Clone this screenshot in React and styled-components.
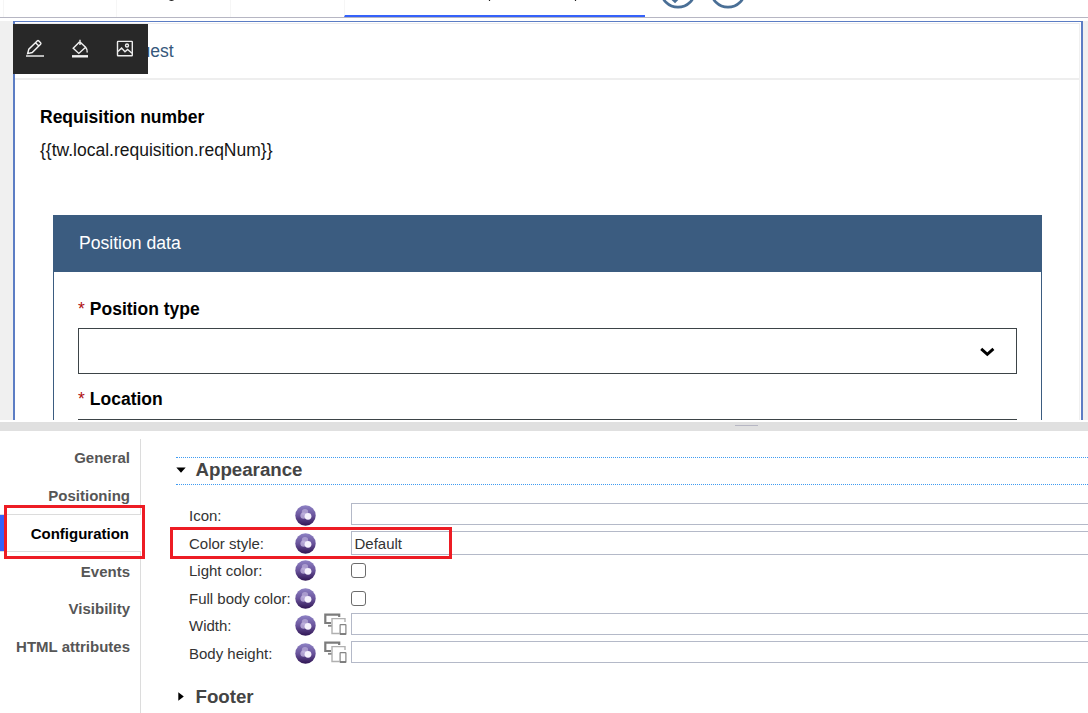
import React from "react";
import styled, { createGlobalStyle } from "styled-components";

const Global = createGlobalStyle`
  * { box-sizing: border-box; }
  body { margin: 0; background: #fff; overflow: hidden; font-family: "Liberation Sans", Arial, sans-serif; }
  svg { display: block; flex: none; }
`;

const Page = styled.div`
  width: 1088px;
  height: 713px;
  display: flex;
  flex-direction: column;
  overflow: hidden;
`;

const TabBar = styled.header`
  height: 18px;
  flex: none;
  display: flex;
  padding-left: 3px;
  border-bottom: 1px solid #b6b6c3;
`;

const Tab = styled.div`
  width: ${(p) => p.$w}px;
  height: 17px;
  padding-left: ${(p) => p.$inset || 0}px;
  border-left: 1px solid #f6f6f6;
  border-bottom: ${(p) => (p.$active ? "2px solid #3562fa" : "none")};
`;

const TabActions = styled.div`
  display: flex;
  padding-left: 13px;
`;

const Canvas = styled.main`
  height: 399px;
  margin-top: 3px;
  flex: none;
  display: flex;
  padding: 0 5px 0 13px;
  background: #f0f0f0;
  position: relative;
`;

const Selection = styled.div`
  flex: 1;
  background: #fff;
  border: 2px solid #5c7dc4;
  border-top-width: 1px;
  border-bottom: none;
  padding: 1px 1px 0 0;
  display: flex;
`;

const Form = styled.section`
  flex: 1;
  border-top: 1px solid #ececf0;
  border-right: 1px solid #f0f0f0;
  overflow: hidden;
`;

const FormTitle = styled.h1`
  margin: 0;
  height: 56px;
  padding-left: 125.5px;
  border-bottom: 2px solid #eeeeee;
  color: #36587c;
  font-size: 17.6px;
  font-weight: 400;
  line-height: 54px;
`;

const FormBody = styled.div`
  padding: 26px 37px 0 25px;
`;

const Label = styled.div`
  height: 22px;
  line-height: 22px;
  font-size: 17.5px;
  font-weight: 700;
  color: #000;
  white-space: pre;
`;

const Required = styled.span`
  font-weight: 400;
  color: #b01010;
  margin-right: 5px;
`;

const Value = styled.div`
  margin: 11px 0 54px;
  height: 22px;
  line-height: 22px;
  font-size: 17.5px;
  color: #161616;
`;

const Panel = styled.section`
  margin-left: 13px;
  border: solid #3b5c80;
  border-width: 0 1px;
`;

const PanelTitle = styled.h2`
  margin: 0;
  height: 57px;
  padding-left: 25px;
  line-height: 57px;
  background: #3b5c80;
  color: #fff;
  font-size: 17.6px;
  font-weight: 400;
`;

const PanelBody = styled.div`
  padding: 26px 24px 0;
`;

const Select = styled.div`
  height: 46px;
  margin: 8px 0 14px;
  padding-right: 21px;
  border: 1px solid #3d4447;
  display: flex;
  align-items: center;
  justify-content: flex-end;
`;

const SelectTop = styled(Select)`
  margin: 9px 0 0;
`;

const FloatingTools = styled.div`
  position: absolute;
  left: 13px;
  top: 3px;
  width: 135px;
  height: 50px;
  background: #282828;
  display: flex;
  align-items: center;
  padding: 0 0 0 12px;
  gap: 25px;
`;

const Splitter = styled.div`
  height: 9px;
  margin-top: 2px;
  flex: none;
  background: #e0e0e0;
  display: flex;
  padding: 3px 0 0 735px;
`;

const Grip = styled.div`
  width: 23px;
  height: 1px;
  background: #b6b6c3;
`;

const Properties = styled.div`
  flex: 1;
  display: flex;
  position: relative;
`;

const SideNav = styled.nav`
  width: 141px;
  margin-top: 8px;
  display: flex;
  flex-direction: column;
`;

const NavItem = styled.div`
  height: ${(p) => p.$h}px;
  padding-right: ${(p) => (p.$active ? 12 : 10)}px;
  line-height: ${(p) => p.$line}px;
  text-align: right;
  font-size: 15px;
  font-weight: 700;
  color: ${(p) => (p.$active ? "#000" : "#565656")};
  border: solid #dcdcdc;
  border-width: ${(p) => (p.$active ? "1px 0" : "0 1px 0 0")};
  ${(p) => p.$active && "background: linear-gradient(to right, #3562fa 4px, transparent 4px);"}
`;

const NavRest = styled.div`
  flex: 1;
  border-right: 1px solid #dcdcdc;
`;

const Settings = styled.div`
  flex: 1;
  padding: 26px 0 0 35px;
`;

const SectionTitle = styled.h3`
  margin: 0;
  height: 28px;
  display: flex;
  align-items: center;
  gap: ${(p) => p.$gap}px;
  padding-left: ${(p) => p.$left}px;
  padding-bottom: 3px;
  font-size: 18.7px;
  color: #444;
  border: dotted #3f9bf2;
  border-width: ${(p) => (p.$lined ? "1px 0" : "0")};
`;

const Rows = styled.div`
  padding: 17px 0 16px 13px;
`;

const Row = styled.div`
  height: ${(p) => p.$h}px;
  display: grid;
  grid-template-columns: 106px 27px 29px 1fr;
`;

const RowLabel = styled.label`
  font-size: 15px;
  line-height: 28px;
  color: #333;
  white-space: nowrap;
`;

const IconCell = styled.div`
  padding-top: ${(p) => p.$top}px;
  padding-left: ${(p) => p.$left || 0}px;
`;

const Input = styled.div`
  height: ${(p) => p.$h || 22}px;
  margin: 1px 0 0;
  padding-left: 2.5px;
  border: 1px solid #b4b9c8;
  border-right: none;
  font-size: 15px;
  line-height: 24px;
  color: #333;
`;

const Check = styled.div`
  width: 15px;
  height: 15px;
  margin-top: 6px;
  border: 1px solid #6c6c6c;
  border-radius: 3px;
`;

const Highlight = styled.div`
  position: absolute;
  left: ${(p) => p.$x}px;
  top: ${(p) => p.$y}px;
  width: ${(p) => p.$w}px;
  height: ${(p) => p.$h}px;
  border: 3px solid #ed1c24;
`;

const PencilIcon = () => (
  <svg width="20" height="20" viewBox="0 0 20 20" fill="none" stroke="#f2f2f2" strokeWidth="1.4">
    <path d="M2.6 14.6 3.8 10.2 12.2 1.9Q13 1.2 13.8 1.9L15.6 3.7Q16.3 4.5 15.6 5.3L7.2 13.5ZM10.5 3.7l3.4 3.4" />
    <path d="M1 17h18" stroke="#c9c9c9" strokeWidth="1.8" />
  </svg>
);

const FillIcon = () => (
  <svg width="20" height="20" viewBox="0 0 20 20" fill="none" stroke="#f2f2f2" strokeWidth="1.4">
    <path d="M10 .8v5.2M9.4 3 3.2 9.2 8.8 14.4 15.6 8.3 10 3M15.2 7.7Q17.6 10.3 17.2 13.5" />
    <path d="M2 17.3h16" strokeWidth="2.4" />
  </svg>
);

const PictureIcon = () => (
  <svg width="20" height="20" viewBox="0 0 20 20" fill="none" stroke="#ededed" strokeWidth="1.4">
    <rect x="2.5" y="2.4" width="14.8" height="14.4" rx=".5" />
    <circle cx="12" cy="6.5" r="1.5" />
    <path d="M3 12.5 6.6 9 10 12.7 12.6 10.5 17 14.2" />
  </svg>
);

const Orb = () => (
  <svg width="21" height="21" viewBox="0 0 21 21">
    <defs>
      <linearGradient id="orb" x1="0" y1="0" x2="0" y2="1">
        <stop offset="0" stopColor="#8e82c4" />
        <stop offset=".5" stopColor="#6a549c" />
        <stop offset="1" stopColor="#301654" />
      </linearGradient>
    </defs>
    <circle cx="10.5" cy="10.5" r="10.2" fill="url(#orb)" />
    <circle cx="10" cy="7.2" r="3.2" fill="#b5a8d6" opacity=".8" />
    <circle cx="8.6" cy="10.6" r="3.2" fill="#c0b3dd" opacity=".8" />
    <circle cx="13" cy="11.3" r="3.4" fill="#f5f1fc" />
  </svg>
);

const DevicesIcon = () => (
  <svg width="23" height="23" viewBox="0 0 23 23" fill="none">
    <path d="M7 10H1.3V1.7H15.2V4" stroke="#7c7c7c" strokeWidth="2.2" />
    <path d="M4 12.8h4" stroke="#858585" strokeWidth="1.8" />
    <path d="M15.5 20.5H8V5.6H21V9" stroke="#b0b0b0" strokeWidth="1.4" />
    <rect x="16.1" y="11.6" width="5.8" height="9.8" rx=".5" fill="#fff" stroke="#858585" strokeWidth="1.2" />
    <path d="M16 20.8h6" stroke="#777" strokeWidth="1.4" />
  </svg>
);

const Round = ({ checked }) => (
  <svg width="50" height="12" viewBox="0 0 50 12" fill="none" stroke="#4a6f96" strokeWidth="2.7">
    <circle cx="20" cy="-9.8" r="17" />
    {checked && <path d="M11.5 -4 17 1.2 24 -6" strokeWidth="3" />}
  </svg>
);

const TabMark = ({ d, w = 8 }) => (
  <svg width={w} height="3" viewBox={`0 0 ${w} 3`} fill="none" stroke="#222" strokeWidth="1.2">
    <path d={d} />
  </svg>
);

const fields = [
  { label: "Icon:", h: 28 },
  { label: "Color style:", h: 27, value: "Default", inputH: 24 },
  { label: "Light color:", h: 28, check: true },
  { label: "Full body color:", h: 27, check: true },
  { label: "Width:", h: 28, devices: true },
  { label: "Body height:", h: 28, devices: true },
];

const nav = [
  ["General", 38, 38],
  ["Positioning", 37, 38],
  ["Configuration", 38, 37],
  ["Events", 38, 40],
  ["Visibility", 37, 38],
  ["HTML attributes", 38, 40],
];

export default function App() {
  return (
    <Page>
      <Global />
      <TabBar>
        <Tab $w={113} />
        <Tab $w={114} $inset={52}><TabMark d="M.5 0Q2.5 .8 4.5 0" /></Tab>
        <Tab $w={114} />
        <Tab $w={301} $inset={143} $active><TabMark w={90} d="M1.5 0v1M87.5 0v1" /></Tab>
        <TabActions><Round checked /><Round /></TabActions>
      </TabBar>
      <Canvas>
        <Selection>
          <Form>
            <FormTitle>uest</FormTitle>
            <FormBody>
              <Label>Requisition number</Label>
              <Value>{"{{tw.local.requisition.reqNum}}"}</Value>
              <Panel>
                <PanelTitle>Position data</PanelTitle>
                <PanelBody>
                  <Label><Required>*</Required>Position type</Label>
                  <Select>
                    <svg width="16" height="12" viewBox="0 0 16 12" fill="none" stroke="#000" strokeWidth="2.9">
                      <path d="M2.2 3.8 8.3 9.3 14.4 3.8" />
                    </svg>
                  </Select>
                  <Label><Required>*</Required>Location</Label>
                  <SelectTop />
                </PanelBody>
              </Panel>
            </FormBody>
          </Form>
        </Selection>
        <FloatingTools>
          <PencilIcon />
          <FillIcon />
          <PictureIcon />
        </FloatingTools>
      </Canvas>
      <Splitter><Grip /></Splitter>
      <Properties>
        <SideNav>
          {nav.map(([name, h, line]) => (
            <NavItem key={name} $h={h} $line={line} $active={name === "Configuration"}>{name}</NavItem>
          ))}
          <NavRest />
        </SideNav>
        <Settings>
          <SectionTitle $lined $gap={9.5} $left={0}>
            <svg width="10" height="6" viewBox="0 0 10 6"><path d="M.3 .5H9.7L5 5.8Z" /></svg>
            Appearance
          </SectionTitle>
          <Rows>
            {fields.map((f) => (
              <Row key={f.label} $h={f.h}>
                <RowLabel>{f.label}</RowLabel>
                <IconCell $top={3}><Orb /></IconCell>
                <IconCell $top={1} $left={2}>{f.devices && <DevicesIcon />}</IconCell>
                {f.check ? <Check /> : <Input $h={f.inputH}>{f.value}</Input>}
              </Row>
            ))}
          </Rows>
          <SectionTitle $gap={11.5} $left={2}>
            <svg width="6" height="9" viewBox="0 0 6 9"><path d="M.3 .2V8.8L5.8 4.5Z" /></svg>
            Footer
          </SectionTitle>
        </Settings>
        <Highlight $x={4} $y={74} $w={141} $h={54} />
        <Highlight $x={170} $y={96} $w={282} $h={32} />
      </Properties>
    </Page>
  );
}
